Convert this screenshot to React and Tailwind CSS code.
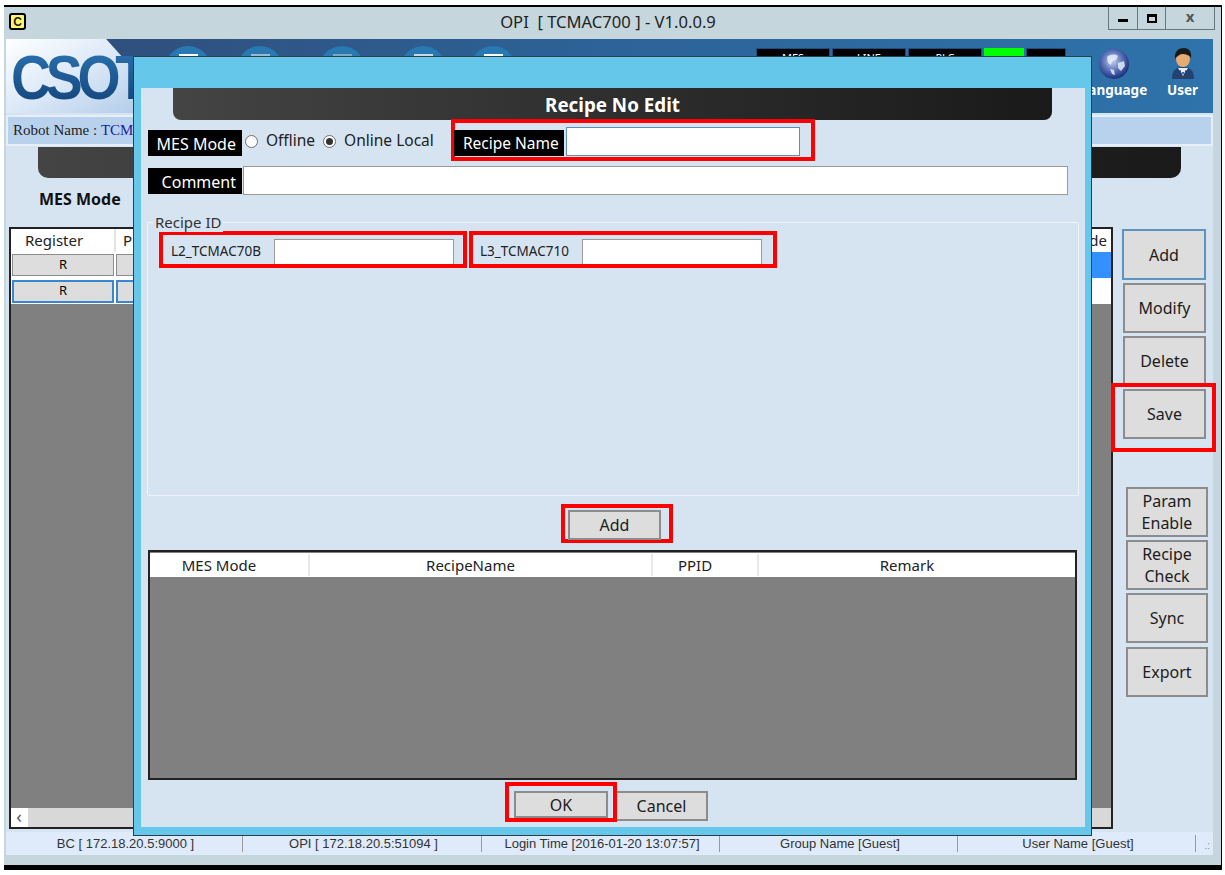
const Btn = ({ className = '', children }) => (
  <div className={`flex items-center justify-center bg-[#dddddd] border-2 border-[#8c8c8c] text-[16px] leading-[22px] text-center text-[#1c1c1c] ${className}`}>
    {children}
  </div>
)

const Label = ({ className = '', children }) => (
  <div className={`flex items-center justify-end bg-black text-white h-[26px] pt-[1px] ${className}`}>{children}</div>
)

const Radio = ({ checked }) => (
  <span className="flex items-center justify-center w-[13px] h-[13px] rounded-full bg-white border border-[#6f6f6f]">
    {checked && <span className="w-[7px] h-[7px] rounded-full bg-[#333333]" />}
  </span>
)

const Dome = ({ className = '', bar }) => (
  <div className={`relative w-[46px] h-[46px] rounded-full bg-[#2878b2] shrink-0 ${className}`}>
    <div className={`absolute top-[8px] left-[14px] w-[19px] h-[3px] ${bar}`} />
  </div>
)

const Led = ({ className = '', children }) => (
  <div className={`h-[28px] bg-black text-white text-[11px] leading-[14px] pt-[2px] text-center border border-[#1d4d78] ${className}`}>{children}</div>
)

function Globe() {
  return (
    <svg width="32" height="32" viewBox="0 0 32 32">
      <defs>
        <radialGradient id="gl" cx="45%" cy="40%" r="60%">
          <stop offset="0%" stopColor="#c6d4ee" />
          <stop offset="55%" stopColor="#5a72b8" />
          <stop offset="100%" stopColor="#1b2f7a" />
        </radialGradient>
      </defs>
      <circle cx="16" cy="16" r="15" fill="url(#gl)" />
      <path d="M9 9c4-3 8-3 11-1l-2 4-4 1-1 4-3-2zM20 15l6-2 1 5-4 5-3-3zM12 21l4 1 1 5-3-1z" fill="#eef2fb" opacity=".8" />
    </svg>
  )
}

function UserIcon() {
  return (
    <svg width="26" height="32" viewBox="0 0 26 32">
      <path d="M2 31c0-9 4-12 11-12s11 3 11 12z" fill="#24416f" />
      <path d="M8 20l5 8 5-8z" fill="#e6edf7" />
      <path d="M10 22l1.500 5 1.500-3 1.500 3 1.500-5" fill="none" stroke="#24416f" strokeWidth="1" />
      <ellipse cx="13" cy="11" rx="7" ry="8" fill="#e8ab72" />
      <path d="M5 11C4 3 9 0 14 0c5 0 8 4 7 10-2-3-5-4-8-4-3 0-6 2-8 5z" fill="#1a1a1a" />
    </svg>
  )
}

export default function App() {
  return (
    <div className="w-[1225px] h-[875px] bg-white overflow-hidden pt-[5px] pl-[4px] font-['Noto_Sans',sans-serif]">
      <div className="relative w-[1218px] h-[865px] bg-[#c5d7dd] border-t-2 border-b-[5px] border-r border-black flex flex-col pl-[2px] pr-[8px]">
        {/* Title bar */}
        <div className="relative h-[32px] shrink-0 flex items-center justify-center text-[16.6px] text-[#222222]">
          <div className="absolute left-[3px] top-[6px] w-[17px] h-[17px] rounded-[3px] bg-[#fff46a] border-2 border-black flex items-center justify-center text-[12px] font-bold font-['Liberation_Sans',sans-serif]">C</div>
          <span className="-ml-[3px] -mt-[2px]">OPI&nbsp; [ TCMAC700 ] - V1.0.0.9</span>
          <div className="absolute right-[-2px] top-0 flex h-[23px] border border-t-0 border-[#68777d] text-[#555555]">
            <div className="w-[29px] flex items-end justify-center pb-[7px] border-r border-[#68777d]"><div className="w-[10px] h-[3px] bg-black" /></div>
            <div className="w-[28px] flex items-center justify-center border-r border-[#68777d]"><div className="w-[10px] h-[9px] border-2 border-t-[3px] border-black" /></div>
            <div className="w-[48px] flex items-center justify-center text-[15px] font-bold leading-none pb-[3px]">x</div>
          </div>
        </div>

        {/* Header */}
        <div className="relative h-[74px] shrink-0 bg-gradient-to-r from-[#2f4c78] via-[#2c6398] to-[#2e73ab] flex items-start overflow-hidden">
          <div className="relative w-[130px] h-full shrink-0">
            <div className="absolute inset-0 bg-gradient-to-br from-white via-[#dce9f7] to-[#b3cdea] [clip-path:polygon(0_0,77%_0,100%_45%,100%_100%,0_100%)]" />
            <span className="absolute left-[5px] top-[3px] origin-left scale-x-[0.88] text-[63px] leading-[70px] font-bold tracking-[-6px] font-['Liberation_Sans',sans-serif] bg-gradient-to-b from-[#2d78b6] to-[#123f75] bg-clip-text text-transparent">CSOT</span>
          </div>
          <div className="flex pt-[7px] ml-[29px]">
            <Dome bar="bg-white" />
            <Dome className="ml-[26px]" bar="bg-[#9fb8c8]" />
            <Dome className="ml-[36px]" bar="bg-[#7fa6c2]" />
            <Dome className="ml-[35px]" bar="bg-[#c8d8e4]" />
            <Dome className="ml-[24px]" bar="bg-white" />
          </div>
          <div className="flex gap-[2px] pt-[9px] ml-[240px]">
            <Led className="w-[74px]">MES</Led>
            <Led className="w-[74px]">LINE</Led>
            <Led className="w-[74px]">PLC</Led>
            <div className="w-[40px] h-[28px] bg-[#00ff00]" />
            <Led className="w-[40px]" />
          </div>
          <div className="flex-1 flex text-white text-[13.5px] font-bold leading-[18px] pt-[9px]">
            <div className="ml-[17px] w-[62px] flex flex-col items-center"><Globe /><span className="mt-[1px]">Language</span></div>
            <div className="ml-[22px] flex flex-col items-center"><UserIcon /><span className="mt-[1px]">User</span></div>
          </div>
        </div>

        {/* Page body */}
        <div className="flex-1 min-h-0 bg-[#d6e4f2] flex flex-col">
          <div className="mt-[2px] h-[31px] shrink-0 bg-[#b8d2ee] border-2 border-[#e6eef7] pl-[5px] flex items-center text-[15px] font-['Liberation_Serif',serif] font-medium text-[#222222]">
            Robot Name :&nbsp;<span className="text-[#1c1c9e]">TCMAC700</span>
          </div>
          <div className="ml-[32px] mr-[32px] mt-[1px] h-[31px] shrink-0 rounded-b-[10px] bg-gradient-to-r from-[#444444] to-[#1a1a1a]" />
          <div className="ml-[33px] h-[48px] shrink-0 pt-[9px] text-[16px] leading-[24px] font-bold text-[#111111]">MES Mode</div>

          <div className="flex-1 min-h-0 flex">
            {/* Grid */}
            <div className="ml-[3px] mt-[1px] mb-[3px] w-[1104px] shrink-0 border-2 border-[#222222] bg-[#808080] flex flex-col">
              <div className="h-[23px] shrink-0 bg-white flex items-center text-[15px] text-[#222222]">
                <div className="w-[105px] pl-[14px] border-r-2 border-[#e4e4e4]">Register</div>
                <div className="pl-[7px]">P</div>
                <div className="flex-1 text-right pr-[4px]">Mode</div>
              </div>
              <div className="h-[26px] shrink-0 flex bg-[#3390ff]">
                <div className="w-[105px] bg-white pl-[1px] pr-[2px] flex items-center"><div className="w-full h-[22px] bg-[#dddddd] border border-[#8c8c8c] flex items-center justify-center text-[13px]">R</div></div>
                <div className="w-[20px] bg-white flex items-center"><div className="w-full h-[22px] bg-[#dddddd] border border-[#8c8c8c]" /></div>
              </div>
              <div className="h-[26px] shrink-0 flex bg-white">
                <div className="w-[105px] pl-[1px] pr-[2px] flex items-center"><div className="w-full h-[23px] bg-[#dddddd] border-2 border-[#3a87d0] flex items-center justify-center text-[13px]">R</div></div>
                <div className="w-[20px] flex items-center"><div className="w-full h-[23px] bg-[#dddddd] border-2 border-[#3a87d0]" /></div>
              </div>
              <div className="flex-1" />
              <div className="h-[19px] shrink-0 bg-[#e4e4e4] flex">
                <div className="w-[16px] bg-white flex items-center justify-center text-[18px] leading-none pb-[3px] text-[#555555]">‹</div>
                <div className="flex-1 bg-[#d8d8d8] border-l border-white" />
              </div>
            </div>

            {/* Right buttons */}
            <div className="flex flex-col items-start pt-[3px]">
              <Btn className="ml-[9px] w-[84px] h-[51px] !border-[#5c94bf]">Add</Btn>
              <Btn className="ml-[10px] mt-[3px] w-[83px] h-[50px]">Modify</Btn>
              <Btn className="ml-[10px] mt-[3px] w-[83px] h-[50px]">Delete</Btn>
              <div className="relative -ml-[2px] -mt-[3px] w-[105px] h-[69px] border-[4px] border-[#ff0000] pl-[8px] pt-[2px]">
                <Btn className="w-[83px] h-[50px]">Save</Btn>
              </div>
              <Btn className="ml-[13px] mt-[35px] w-[82px] h-[50px]">Param<br />Enable</Btn>
              <Btn className="ml-[13px] mt-[3px] w-[82px] h-[50px]">Recipe<br />Check</Btn>
              <Btn className="ml-[13px] mt-[3px] w-[82px] h-[50px]">Sync</Btn>
              <Btn className="ml-[13px] mt-[4px] w-[82px] h-[50px]">Export</Btn>
            </div>
          </div>
        </div>

        {/* Status bar */}
        <div className="h-[23px] shrink-0 bg-[#dfeafa] flex items-center text-[13px] text-[#333333] font-['Liberation_Sans',sans-serif]">
          <div className="w-[237px] h-[17px] flex items-center justify-center pl-[3px] pt-[1px] border-r border-[#9a9a9a]">BC [ 172.18.20.5:9000 ]</div>
          <div className="w-[239px] h-[17px] flex items-center justify-center pl-[3px] pt-[1px] border-r border-[#9a9a9a]">OPI [ 172.18.20.5:51094 ]</div>
          <div className="w-[238px] h-[17px] flex items-center justify-center pl-[3px] pt-[1px] border-r border-[#9a9a9a]">Login Time [2016-01-20 13:07:57]</div>
          <div className="w-[238px] h-[17px] flex items-center justify-center pl-[3px] pt-[1px] border-r border-[#9a9a9a]">Group Name [Guest]</div>
          <div className="w-[238px] h-[17px] flex items-center justify-center pl-[3px] pt-[1px] border-r border-[#9a9a9a]">User Name [Guest]</div>
          <div className="flex-1 h-[17px] flex items-end justify-end pr-[3px] text-[10px] leading-[12px] text-[#8a8a8a]">.:</div>
        </div>
        <div className="h-[10px] shrink-0" />

        {/* Recipe No Edit dialog */}
        <div className="absolute left-[129px] top-[49px] w-[959px] h-[780px] border border-[#2c3e4a] bg-[#65c8ea] pl-[7px] pr-[6px] pt-[31px] pb-[8px]">
          <div className="h-full bg-[#d6e4f2] flex flex-col">
            <div className="ml-[32px] mr-[33px] h-[32px] shrink-0 rounded-b-[8px] bg-gradient-to-r from-[#444444] to-[#1a1a1a] flex items-end justify-center pb-[3px] text-white text-[18.8px] font-bold leading-[24px]">Recipe No Edit</div>

            <div className="h-[41px] shrink-0 flex items-start">
              <Label className="ml-[7px] mt-[10px] w-[94px] pr-[6px] text-[16px]">MES Mode</Label>
              <div className="ml-[3px] mt-[11px] h-[20px] flex items-center text-[15.5px] text-[#222222]">
                <Radio />
                <span className="ml-[8px]">Offline</span>
                <span className="ml-[8px]"><Radio checked /></span>
                <span className="ml-[8px]">Online Local</span>
              </div>
              <div className="ml-[17px] -mt-[1px] w-[364px] h-[42px] shrink-0 border-[4px] border-[#ff0000] flex items-start pt-[4px]">
                <Label className="-ml-[1px] mt-[3px] w-[110px] pr-[5px] text-[15.5px]">Recipe Name</Label>
                <div className="ml-[2px] w-[234px] h-[29px] bg-white border border-[#5f8fb4]" />
              </div>
            </div>

            <div className="mt-[5px] h-[29px] shrink-0 flex items-start">
              <Label className="ml-[7px] mt-[2px] w-[94px] pr-[6px] text-[16px]">Comment</Label>
              <div className="ml-[1px] w-[825px] h-[29px] bg-white border border-[#9a9a9a]" />
            </div>

            {/* Recipe ID group */}
            <div className="relative ml-[6px] mt-[27px] w-[932px] h-[274px] shrink-0 border border-[#eef4fa] rounded-[2px] flex items-start pl-[11px] pt-[8px] gap-[2px]">
              <span className="absolute left-[5px] -top-[11px] bg-[#d6e4f2] px-[2px] text-[15px] leading-[20px] text-[#333333]">Recipe ID</span>
              <div className="w-[308px] h-[37px] border-[4px] border-[#ff0000] flex items-end pl-[8px]">
                <span className="w-[103px] self-center mt-[3px] text-[13.5px] text-[#222222]">L2_TCMAC70B</span>
                <div className="w-[180px] h-[25px] bg-white border border-b-0 border-[#9a9a9a]" />
              </div>
              <div className="w-[308px] h-[37px] border-[4px] border-[#ff0000] flex items-end pl-[7px]">
                <span className="w-[102px] self-center mt-[3px] text-[13.5px] text-[#222222]">L3_TCMAC710</span>
                <div className="w-[180px] h-[25px] bg-white border border-b-0 border-[#9a9a9a]" />
              </div>
            </div>

            <div className="ml-[420px] mt-[8px] w-[112px] h-[39px] shrink-0 border-[4px] border-[#ff0000] pl-[3px] pt-[2px]">
              <Btn className="w-[93px] h-[30px]">Add</Btn>
            </div>

            {/* Recipe table */}
            <div className="ml-[7px] mt-[7px] w-[929px] h-[230px] shrink-0 border-2 border-[#222222] bg-[#808080] flex flex-col">
              <div className="h-[24px] mt-[1px] bg-white flex items-center text-[15px] text-[#222222] text-center">
                <div className="w-[160px] pr-[20px] border-r-2 border-[#e8e8e8]">MES Mode</div>
                <div className="w-[343px] pr-[20px] border-r-2 border-[#e8e8e8]">RecipeName</div>
                <div className="w-[106px] pr-[20px] border-r-2 border-[#e8e8e8]">PPID</div>
                <div className="flex-1 pr-[20px]">Remark</div>
              </div>
            </div>

            <div className="shrink-0 flex items-start mt-[2px]">
              <div className="relative z-10 ml-[364px] w-[112px] h-[40px] border-[4px] border-[#ff0000] pl-[5px] pt-[5px]">
                <Btn className="w-[94px] h-[27px]">OK</Btn>
              </div>
              <Btn className="-ml-[2px] mt-[9px] w-[93px] h-[30px]">Cancel</Btn>
            </div>
          </div>
        </div>
      </div>
    </div>
  )
}
